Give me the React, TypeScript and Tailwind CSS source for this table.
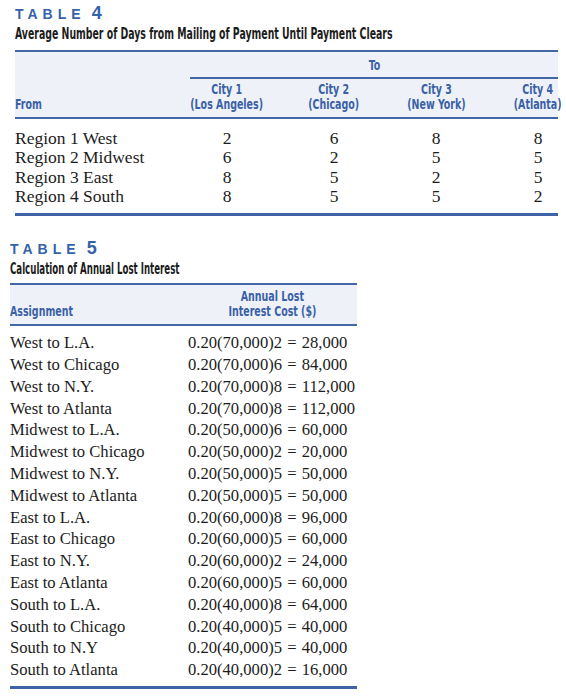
const serif = "font-['Liberation_Serif',serif]";
const cond = "font-['DejaVu_Sans_Condensed',sans-serif]";

const days = [
  ['Region 1 West', '2', '6', '8', '8'],
  ['Region 2 Midwest', '6', '2', '5', '5'],
  ['Region 3 East', '8', '5', '2', '5'],
  ['Region 4 South', '8', '5', '5', '2'],
];

const costs = [
  ['West to L.A.', '0.20(70,000)2', '28,000'],
  ['West to Chicago', '0.20(70,000)6', '84,000'],
  ['West to N.Y.', '0.20(70,000)8', '112,000'],
  ['West to Atlanta', '0.20(70,000)8', '112,000'],
  ['Midwest to L.A.', '0.20(50,000)6', '60,000'],
  ['Midwest to Chicago', '0.20(50,000)2', '20,000'],
  ['Midwest to N.Y.', '0.20(50,000)5', '50,000'],
  ['Midwest to Atlanta', '0.20(50,000)5', '50,000'],
  ['East to L.A.', '0.20(60,000)8', '96,000'],
  ['East to Chicago', '0.20(60,000)5', '60,000'],
  ['East to N.Y.', '0.20(60,000)2', '24,000'],
  ['East to Atlanta', '0.20(60,000)5', '60,000'],
  ['South to L.A.', '0.20(40,000)8', '64,000'],
  ['South to Chicago', '0.20(40,000)5', '40,000'],
  ['South to N.Y', '0.20(40,000)5', '40,000'],
  ['South to Atlanta', '0.20(40,000)2', '16,000'],
];

const Head = ({ children, left }: { children: React.ReactNode; left?: boolean }) => (
  <span
    className={`inline-block shrink-0 whitespace-nowrap text-center scale-x-[0.78] ${left ? 'origin-left' : 'origin-center'}`}
  >
    {children}
  </span>
);

const TableLabel = ({ num }: { num: string }) => (
  <div className="flex items-baseline h-[16px] text-[#3562a9] font-['Liberation_Sans',sans-serif] font-bold leading-none">
    <span className="text-[14px] tracking-[5px]">TABLE</span>
    <span className="ml-[6px] text-[18px]">{num}</span>
  </div>
);

const Title = ({ text, squeeze }: { text: string; squeeze: string }) => (
  <div className={`${cond} mt-[5px] text-[16px] font-bold text-[#1c1c1c] leading-[18px]`}>
    <span className={`inline-block whitespace-nowrap origin-left ${squeeze}`}>{text}</span>
  </div>
);

const cols4 = 'grid grid-cols-[175px_74px_140px_64px_50px_40px]';

const App = () => {
  return (
    <div className="w-[566px] h-[700px] bg-white overflow-hidden">
      {/* table 4 */}
      <div className="pl-[15px] pr-[8px] pt-[4px]">
        <TableLabel num="4" />
        <Title text="Average Number of Days from Mailing of Payment Until Payment Clears" squeeze="scale-x-[0.65]" />
        <div className="mt-[7px] border-t-2 border-[#4266a6]">
          <div className={`${cond} bg-[#eef1f8] font-bold text-[#3a61a6] text-[13.5px] leading-[15px]`}>
            <div className="grid grid-cols-[175px_1fr]">
              <div />
              <div className="flex justify-center pt-[6px] pb-[4px] border-b-2 border-[#4266a6]">
                <Head>To</Head>
              </div>
            </div>
            <div className={`${cols4} items-end pt-[3px] pb-[5px]`}>
              <div>
                <Head left>From</Head>
              </div>
              <div className="flex justify-center">
                <Head>City 1<br />(Los Angeles)</Head>
              </div>
              <div className="flex justify-center">
                <Head>City 2<br />(Chicago)</Head>
              </div>
              <div className="flex justify-center">
                <Head>City 3<br />(New York)</Head>
              </div>
              <div />
              <div className="flex justify-center">
                <Head>City 4<br />(Atlanta)</Head>
              </div>
            </div>
          </div>
          <div className="border-t-2 border-[#4266a6] pt-[10px] pb-[7px]">
            {days.map((r) => (
              <div
                key={r[0]}
                className={`${serif} ${cols4} text-[17.5px] leading-[19.3px] text-[#1c1c1c]`}
              >
                <div>{r[0]}</div>
                <div className="text-center">{r[1]}</div>
                <div className="text-center">{r[2]}</div>
                <div className="text-center">{r[3]}</div>
                <div />
                <div className="text-center">{r[4]}</div>
              </div>
            ))}
          </div>
          <div className="h-[3px] bg-[#3d62a5]" />
        </div>
      </div>

      {/* table 5 */}
      <div className="pl-[10px] w-[357px] mt-[23px]">
        <TableLabel num="5" />
        <Title text="Calculation of Annual Lost Interest" squeeze="scale-x-[0.6]" />
        <div className="mt-[5px] border-t-2 border-[#4266a6]">
          <div
            className={`${cond} bg-[#eef1f8] font-bold text-[#3a61a6] text-[13.5px] leading-[15px] grid grid-cols-[178px_1fr] items-end pt-[4px] pb-[5px]`}
          >
            <div>
              <Head left>Assignment</Head>
            </div>
            <div className="flex justify-center">
              <Head>Annual Lost<br />Interest Cost ($)</Head>
            </div>
          </div>
          <div className="border-t-2 border-[#4266a6] pt-[6px] pb-[5px]">
            {costs.map((r) => (
              <div
                key={r[0]}
                className={`${serif} grid grid-cols-[178px_1fr] text-[16.6px] leading-[21.8px] text-[#1c1c1c]`}
              >
                <div>{r[0]}</div>
                <div className="whitespace-nowrap">
                  {r[1]} <span className="px-[1px]">=</span> {r[2]}
                </div>
              </div>
            ))}
          </div>
          <div className="h-[3px] bg-[#3d62a5]" />
        </div>
      </div>
    </div>
  );
};

export default App;
